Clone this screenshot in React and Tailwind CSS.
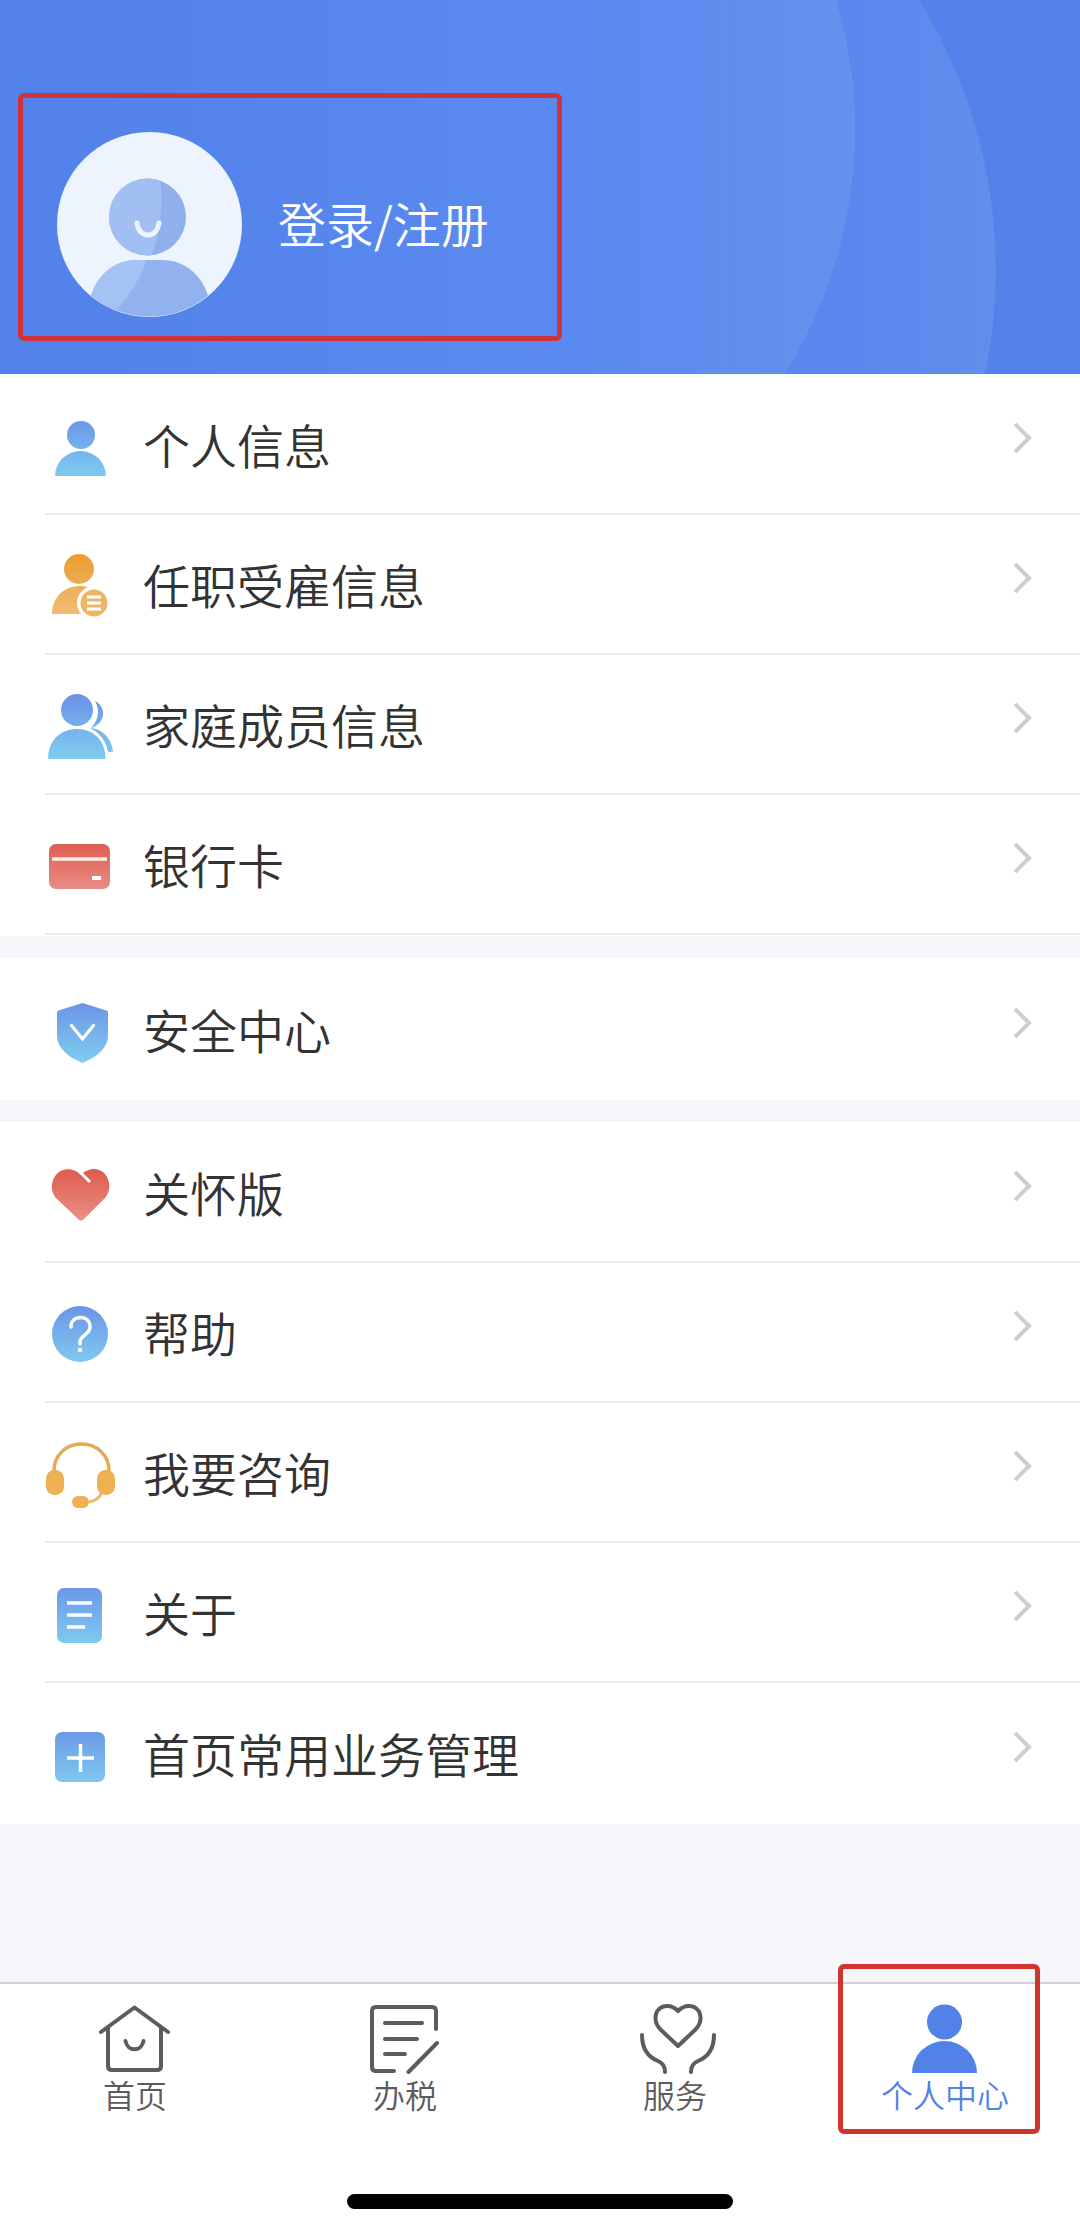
import { useState } from 'react';

const Gradients = () => (
  <svg className="absolute w-0 h-0" aria-hidden="true">
    <defs>
      <linearGradient id="blue" gradientUnits="userSpaceOnUse" x1="0" y1="8" x2="0" y2="70">
        <stop offset="0" stopColor="#6b93e8" />
        <stop offset="1" stopColor="#7fcdf0" />
      </linearGradient>
      <linearGradient id="orange" gradientUnits="userSpaceOnUse" x1="0" y1="6" x2="0" y2="70">
        <stop offset="0" stopColor="#eb9c30" />
        <stop offset="1" stopColor="#f0bf78" />
      </linearGradient>
      <linearGradient id="red" gradientUnits="userSpaceOnUse" x1="0" y1="12" x2="0" y2="66">
        <stop offset="0" stopColor="#dd5a4b" />
        <stop offset="1" stopColor="#ea9289" />
      </linearGradient>
    </defs>
  </svg>
);

const icons = {
  person: (
    <g fill="url(#blue)">
      <circle cx="36" cy="27" r="14" />
      <path d="M10 68a25.5 25 0 0 1 51 0z" />
    </g>
  ),
  job: (
    <>
      <g fill="url(#orange)">
        <circle cx="34" cy="21" r="15" />
        <path d="M7 66C7 49 19 38 35 38c10 0 18 4 23 11v17z" />
      </g>
      <circle cx="49" cy="55" r="17" fill="#fff" />
      <circle cx="49" cy="55" r="13.5" fill="#eeb565" />
      <path d="M42 49h14M42 55h14M42 61h14" stroke="#fff" strokeWidth="2.8" />
    </>
  ),
  family: (
    <g fill="url(#blue)">
      <circle cx="32" cy="22" r="16" />
      <path d="M3 71C3 53 15 41 32 41s28.500 12 28.500 30z" />
      <path d="M50 13c11 5 12 22-4 27 8-9 9-18 4-27z" />
      <path d="M45 40c13 1 22 11 23 24h-5c-2-11-8-19-18-24z" />
    </g>
  ),
  card: (
    <>
      <rect x="4" y="16" width="61" height="45" rx="7" fill="url(#red)" />
      <path d="M7 31h55" stroke="#fdeee6" strokeWidth="3.500" />
      <path d="M47 50h9" stroke="#fff" strokeWidth="4" />
    </>
  ),
  shield: (
    <>
      <path d="M37.500 10l24 7.500q1.500.5 1.500 2V42c0 13-11 22-25.500 28C23 64 12 55 12 42V19.500q0-1.500 1.500-2z" fill="url(#blue)" />
      <path d="M26.500 32.500L37.500 46l11-13.500" fill="none" stroke="#fff" strokeWidth="3.200" strokeLinecap="round" />
    </>
  ),
  heart: (
    <>
      <path d="M33 63L12 43C4 35 6 22 14 16c7-5 17-3 22 3 5-6 16-9 23-2 7 7 7 18 1 25L39 63q-3 3-6 0z" fill="url(#red)" />
      <path d="M33 14l12 12" stroke="#fff" strokeWidth="3" />
    </>
  ),
  help: (
    <>
      <circle cx="35" cy="38" r="28" fill="url(#blue)" />
      <path d="M26 31c0-6 4-9.500 9.500-9.500S45 25 45 31c0 8-10 8-10 15v2" fill="none" stroke="#fff" strokeWidth="3.500" strokeLinecap="round" />
      <circle cx="35" cy="54" r="2.300" fill="#fff" />
    </>
  ),
  headset: (
    <>
      <path d="M9 38v-3C9 19 21 8 36.500 8S64 19 64 35v3" fill="none" stroke="#e3ac54" strokeWidth="3.500" />
      <path d="M57 56c-2 5-6 9-13 10" fill="none" stroke="#e9b96c" strokeWidth="3" />
      <g fill="#eeb052">
        <rect x="1" y="34" width="18" height="25" rx="8.500" />
        <rect x="52" y="34" width="18" height="25" rx="8.500" />
        <rect x="27" y="60" width="17" height="12" rx="6" />
      </g>
    </>
  ),
  doc: (
    <>
      <rect x="12" y="12" width="45" height="55" rx="7" fill="url(#blue)" />
      <path d="M22 27h25M22 39h25M22 51h18" stroke="#fff" strokeWidth="3.500" />
    </>
  ),
  plus: (
    <>
      <rect x="10" y="15" width="50" height="50" rx="7" fill="url(#blue)" />
      <path d="M22 41h27M35.500 27v28" stroke="#fff" strokeWidth="3.500" />
    </>
  ),
};

const menuGroups = [
  [
    { icon: 'person', label: '个人信息' },
    { icon: 'job', label: '任职受雇信息' },
    { icon: 'family', label: '家庭成员信息' },
    { icon: 'card', label: '银行卡', divider: true },
  ],
  [{ icon: 'shield', label: '安全中心' }],
  [
    { icon: 'heart', label: '关怀版' },
    { icon: 'help', label: '帮助' },
    { icon: 'headset', label: '我要咨询' },
    { icon: 'doc', label: '关于' },
    { icon: 'plus', label: '首页常用业务管理' },
  ],
];

const tabs = [
  {
    label: '首页',
    icon: (
      <path d="M4 30L37.500 5.500 71 30M11 26v38q0 4 4 4h45q4 0 4-4V26M28.500 39c2 11 16 11 18 0" />
    ),
  },
  {
    label: '办税',
    icon: (
      <path d="M69 27V9q0-4-4-4H9Q5 5 5 9v56q0 4 4 4h18M70 41L41.500 70M18 21h37M18 37h32M18 52h20" />
    ),
  },
  {
    label: '服务',
    icon: (
      <path d="M41 44L24 28C16 20 17 9 25 5c6-2 11-1 16 4 5-5 10-6 16-4 8 4 9 15 1 23zM5 33c0 13 6 22 16 26 5 2 7 5 7 11M77 33c0 13-6 22-16 26-5 2-7 5-7 11" />
    ),
  },
  {
    label: '个人中心',
    marked: true,
    icon: (
      <g fill="currentColor" stroke="none">
        <circle cx="37.500" cy="20" r="17.500" />
        <path d="M5 71a32.500 32 0 0 1 65 0z" />
      </g>
    ),
  },
];

const Avatar = () => (
  <svg className="size-[185px] shrink-0" viewBox="0 0 185 185" aria-hidden="true">
    <defs>
      <clipPath id="avatar-circle"><circle cx="92.500" cy="92.500" r="92" /></clipPath>
      <clipPath id="avatar-head"><circle cx="90.500" cy="85" r="38.500" /></clipPath>
      <clipPath id="avatar-body"><path d="M30 185C32 150 52 128 80 128h25c28 0 48 22 50 57z" /></clipPath>
    </defs>
    <circle cx="92.500" cy="92.500" r="92.500" fill="#edf4fe" />
    <g clipPath="url(#avatar-head)">
      <rect x="50" y="40" width="80" height="85" fill="#90b0ec" />
      <path d="M50 40h52c5 30 2 58-8 85H50z" fill="#a1bff2" />
    </g>
    <path d="M80 91c2 16 20 16 22 0" fill="none" stroke="#edf4fe" strokeWidth="5" strokeLinecap="round" />
    <g clipPath="url(#avatar-circle)">
      <g clipPath="url(#avatar-body)">
        <rect x="20" y="120" width="140" height="65" fill="#91b1ef" />
        <path d="M20 120h72c-6 22-18 42-34 60H20z" fill="#a4c2f3" />
      </g>
    </g>
  </svg>
);

const Header = () => (
  <header className="relative flex overflow-hidden bg-[#5282ea] px-[18px] pt-[93px] pb-[33px]">
    <svg className="absolute inset-0 size-full" viewBox="0 0 1080 374" preserveAspectRatio="xMaxYMid slice" aria-hidden="true">
      <defs>
        <linearGradient id="outer-glow" gradientUnits="userSpaceOnUse" x1="0" y1="0" x2="996" y2="0">
          <stop offset="0.100" stopColor="#5282ea" />
          <stop offset="0.500" stopColor="#5a89ef" />
          <stop offset="0.850" stopColor="#5987ed" />
          <stop offset="1" stopColor="#628eec" />
        </linearGradient>
        <linearGradient id="inner-glow" gradientUnits="userSpaceOnUse" x1="500" y1="0" x2="855" y2="0">
          <stop offset="0.200" stopColor="#6692ee" stopOpacity="0" />
          <stop offset="1" stopColor="#6692ee" />
        </linearGradient>
      </defs>
      <path d="M0 0h919a512 512 0 0 1 66 374H0z" fill="url(#outer-glow)" />
      <circle cx="398" cy="130" r="457" fill="url(#inner-glow)" />
    </svg>
    <a
      href="#login"
      className="relative flex items-center gap-9 rounded-md border-[5px] border-[#cf323a] pt-[34px] pr-[68px] pb-[19px] pl-[34px] text-5xl text-white"
    >
      <Avatar />
      <span className="mb-1.5 font-[350]">登录/注册</span>
    </a>
  </header>
);

const MenuRow = ({ item, last }) => (
  <li className={`ml-[45px] h-[140px] ${!last || item.divider ? 'border-b-2 border-[#ececee]' : ''}`}>
    <a href={`#${item.icon}`} className="flex h-full items-center pr-12">
      <svg className="size-[72px] shrink-0" viewBox="0 0 72 72" aria-hidden="true">
        {icons[item.icon]}
      </svg>
      <span className="ml-[26px] flex-1 text-[47px] leading-[64px] font-[350] text-[#333333]">{item.label}</span>
      <svg className="mb-3 h-8 w-5" viewBox="0 0 20 32" fill="none" stroke="#cecece" strokeWidth="4" aria-hidden="true">
        <path d="M3 2l14 14L3 30" />
      </svg>
    </a>
  </li>
);

const TabBar = () => {
  const [active, setActive] = useState('个人中心');

  return (
    <footer className="border-t-2 border-[#cfd1d6] bg-white pb-[23px]">
      <nav className="grid grid-cols-4">
        {tabs.map((tab) => (
          <button
            key={tab.label}
            type="button"
            onClick={() => setActive(tab.label)}
            className={`relative flex flex-col items-center pt-[18px] ${active === tab.label ? 'text-[#5282e8]' : 'text-[#5c5c5c]'}`}
          >
            <svg
              className="h-[72px] w-20 overflow-visible"
              viewBox="-2 0 80 72"
              fill="none"
              stroke="currentColor"
              strokeWidth="4"
              strokeLinecap="round"
              strokeLinejoin="round"
              aria-hidden="true"
            >
              {tab.icon}
            </svg>
            <span className="text-[32px] leading-10 font-[350]">{tab.label}</span>
            {tab.marked && (
              <span className="absolute -top-5 right-10 left-7 h-[170px] rounded-md border-[5px] border-[#cf342d]" />
            )}
          </button>
        ))}
      </nav>
      <div className="mx-auto mt-20 h-[15px] w-[386px] rounded-full bg-black" />
    </footer>
  );
};

const App = () => (
  <div className="flex min-h-screen flex-col bg-[#f4f6fa] font-['Noto_Sans_CJK_SC',sans-serif]">
    <Gradients />
    <Header />
    <main className="flex flex-1 flex-col gap-[22px]">
      {menuGroups.map((group) => (
        <ul key={group[0].label} className="bg-white py-px">
          {group.map((item, index) => (
            <MenuRow key={item.label} item={item} last={index === group.length - 1} />
          ))}
        </ul>
      ))}
    </main>
    <TabBar />
  </div>
);

export default App;
